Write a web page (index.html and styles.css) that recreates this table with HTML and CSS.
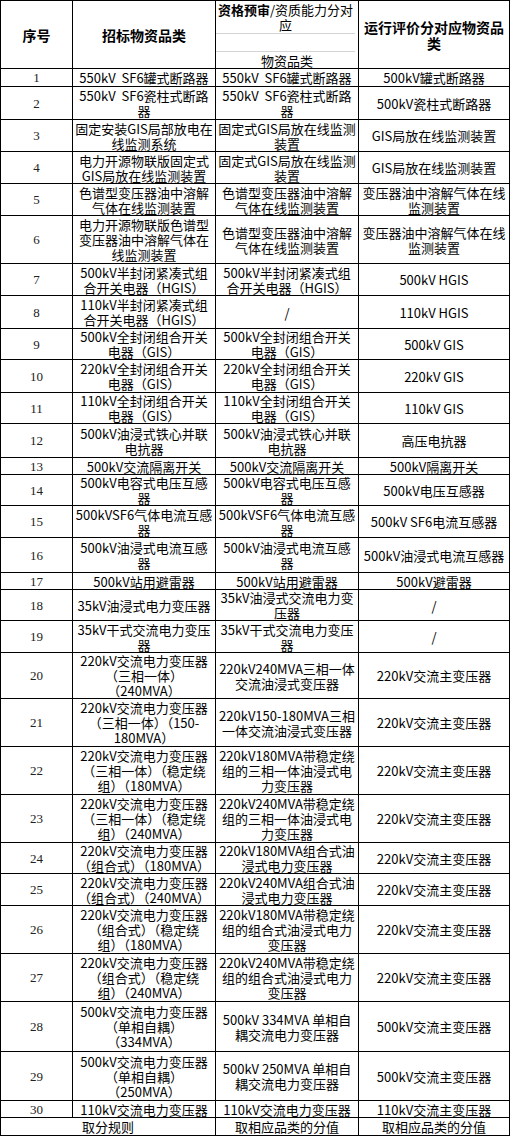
FILE: index.html
```html
<!DOCTYPE html>
<html lang="zh">
<head>
<meta charset="utf-8">
<title>物资品类对应表</title>
<link rel="stylesheet" href="styles.css">
</head>
<body>
<div class="sheet">
  <div class="c h">序号</div>
  <div class="c h">招标物资品类</div>
  <div class="c hsplit">
    <div class="hs-top"><span><b>资格预审</b>/资质能力分对<br>应</span></div>
    <div class="hs-mid"></div>
    <div class="hs-bot">物资品类</div>
  </div>
  <div class="c h">运行评价分对应物资品<br>类</div>

  <div class="c n">1</div><div class="c">550kV&nbsp;&nbsp;SF6罐式断路器</div><div class="c">550kV&nbsp;&nbsp;SF6罐式断路器</div><div class="c">500kV罐式断路器</div>
  <div class="c n">2</div><div class="c">550kV&nbsp;&nbsp;SF6瓷柱式断路<br>器</div><div class="c">550kV&nbsp;&nbsp;SF6瓷柱式断路<br>器</div><div class="c">500kV瓷柱式断路器</div>
  <div class="c n">3</div><div class="c">固定安装GIS局部放电在<br>线监测系统</div><div class="c">固定式GIS局放在线监测<br>装置</div><div class="c">GIS局放在线监测装置</div>
  <div class="c n">4</div><div class="c">电力开源物联版固定式<br>GIS局放在线监测装置</div><div class="c">固定式GIS局放在线监测<br>装置</div><div class="c">GIS局放在线监测装置</div>
  <div class="c n">5</div><div class="c">色谱型变压器油中溶解<br>气体在线监测装置</div><div class="c">色谱型变压器油中溶解<br>气体在线监测装置</div><div class="c">变压器油中溶解气体在线<br>监测装置</div>
  <div class="c n">6</div><div class="c">电力开源物联版色谱型<br>变压器油中溶解气体在<br>线监测装置</div><div class="c">色谱型变压器油中溶解<br>气体在线监测装置</div><div class="c">变压器油中溶解气体在线<br>监测装置</div>
  <div class="c n">7</div><div class="c">500kV半封闭紧凑式组<br>合开关电器（HGIS）</div><div class="c">500kV半封闭紧凑式组<br>合开关电器（HGIS）</div><div class="c">500kV HGIS</div>
  <div class="c n">8</div><div class="c">110kV半封闭紧凑式组<br>合开关电器（HGIS）</div><div class="c">/</div><div class="c">110kV HGIS</div>
  <div class="c n">9</div><div class="c">500kV全封闭组合开关<br>电器（GIS）</div><div class="c">500kV全封闭组合开关<br>电器（GIS）</div><div class="c">500kV GIS</div>
  <div class="c n">10</div><div class="c">220kV全封闭组合开关<br>电器（GIS）</div><div class="c">220kV全封闭组合开关<br>电器（GIS）</div><div class="c">220kV GIS</div>
  <div class="c n">11</div><div class="c">110kV全封闭组合开关<br>电器（GIS）</div><div class="c">110kV全封闭组合开关<br>电器（GIS）</div><div class="c">110kV GIS</div>
  <div class="c n">12</div><div class="c">500kV油浸式铁心并联<br>电抗器</div><div class="c">500kV油浸式铁心并联<br>电抗器</div><div class="c">高压电抗器</div>
  <div class="c n">13</div><div class="c">500kV交流隔离开关</div><div class="c">500kV交流隔离开关</div><div class="c">500kV隔离开关</div>
  <div class="c n">14</div><div class="c">500kV电容式电压互感<br>器</div><div class="c">500kV电容式电压互感<br>器</div><div class="c">500kV电压互感器</div>
  <div class="c n">15</div><div class="c">500kVSF6气体电流互感<br>器</div><div class="c">500kVSF6气体电流互感<br>器</div><div class="c">500kV&nbsp;SF6电流互感器</div>
  <div class="c n">16</div><div class="c">500kV油浸式电流互感<br>器</div><div class="c">500kV油浸式电流互感<br>器</div><div class="c">500kV油浸式电流互感器</div>
  <div class="c n">17</div><div class="c">500kV站用避雷器</div><div class="c">500kV站用避雷器</div><div class="c">500kV避雷器</div>
  <div class="c n">18</div><div class="c">35kV油浸式电力变压器</div><div class="c">35kV油浸式交流电力变<br>压器</div><div class="c">/</div>
  <div class="c n">19</div><div class="c">35kV干式交流电力变压<br>器</div><div class="c">35kV干式交流电力变压<br>器</div><div class="c">/</div>
  <div class="c n">20</div><div class="c">220kV交流电力变压器<br>（三相一体）<br>（240MVA）</div><div class="c">220kV240MVA三相一体<br>交流油浸式变压器</div><div class="c">220kV交流主变压器</div>
  <div class="c n">21</div><div class="c">220kV交流电力变压器<br>（三相一体）（150-<br>180MVA）</div><div class="c">220kV150-180MVA三相<br>一体交流油浸式变压器</div><div class="c">220kV交流主变压器</div>
  <div class="c n">22</div><div class="c">220kV交流电力变压器<br>（三相一体）（稳定绕<br>组）（180MVA）</div><div class="c">220kV180MVA带稳定绕<br>组的三相一体油浸式电<br>力变压器</div><div class="c">220kV交流主变压器</div>
  <div class="c n">23</div><div class="c">220kV交流电力变压器<br>（三相一体）（稳定绕<br>组）（240MVA）</div><div class="c">220kV240MVA带稳定绕<br>组的三相一体油浸式电<br>力变压器</div><div class="c">220kV交流主变压器</div>
  <div class="c n">24</div><div class="c">220kV交流电力变压器<br>（组合式）（180MVA）</div><div class="c">220kV180MVA组合式油<br>浸式电力变压器</div><div class="c">220kV交流主变压器</div>
  <div class="c n">25</div><div class="c">220kV交流电力变压器<br>（组合式）（240MVA）</div><div class="c">220kV240MVA组合式油<br>浸式电力变压器</div><div class="c">220kV交流主变压器</div>
  <div class="c n">26</div><div class="c">220kV交流电力变压器<br>（组合式）（稳定绕<br>组）（180MVA）</div><div class="c">220kV180MVA带稳定绕<br>组的组合式油浸式电力<br>变压器</div><div class="c">220kV交流主变压器</div>
  <div class="c n">27</div><div class="c">220kV交流电力变压器<br>（组合式）（稳定绕<br>组）（240MVA）</div><div class="c">220kV240MVA带稳定绕<br>组的组合式油浸式电力<br>变压器</div><div class="c">220kV交流主变压器</div>
  <div class="c n">28</div><div class="c">500kV交流电力变压器<br>（单相自耦）<br>（334MVA）</div><div class="c">500kV&nbsp;334MVA&nbsp;单相自<br>耦交流电力变压器</div><div class="c">500kV交流主变压器</div>
  <div class="c n">29</div><div class="c">500kV交流电力变压器<br>（单相自耦）<br>（250MVA）</div><div class="c">500kV&nbsp;250MVA&nbsp;单相自<br>耦交流电力变压器</div><div class="c">500kV交流主变压器</div>
  <div class="c n">30</div><div class="c">110kV交流电力变压器</div><div class="c">110kV交流电力变压器</div><div class="c">110kV交流主变压器</div>

  <div class="c span2">取分规则</div><div class="c">取相应品类的分值</div><div class="c">取相应品类的分值</div>
</div>
</body>
</html>
```

FILE: styles.css
```css
html, body {
  margin: 0;
  padding: 0;
  background: #ffffff;
}

.sheet {
  display: grid;
  grid-template-columns: 72px 143px 143px 151px;
  grid-template-rows:
    68px 18px 33px 32px 32px 32px 48px 32px 33px 31px 33px 31px 34px 17px
    31px 32px 35px 17px 31px 32px 46px 48px 48px 48px 31px 32px 48px 48px
    50px 49px 17px 18px;
  width: 509px;
  border-top: 1px solid #000;
  border-left: 1px solid #000;
  font-family: "Noto Sans CJK SC", "Noto Sans", sans-serif;
  font-size: 13px;
  line-height: 15px;
  color: #000;
}

.c {
  box-sizing: border-box;
  border-right: 1px solid #000;
  border-bottom: 1px solid #000;
  display: flex;
  align-items: center;
  justify-content: center;
  text-align: center;
  white-space: nowrap;
}

.h {
  font-weight: bold;
  font-size: 14px;
  line-height: 16px;
}

.n {
  font-family: "Liberation Serif", "DejaVu Serif", serif;
  font-size: 13px;
  color: #222;
}

.span2 {
  grid-column: span 2;
}

.hsplit {
  flex-direction: column;
  align-items: stretch;
  justify-content: flex-start;
}

.hs-top {
  height: 32px;
  display: flex;
  align-items: center;
  justify-content: center;
  line-height: 15px;
  border-bottom: 1px solid #d4d4d4;
  margin-right: 3px;
}

.hs-top b {
  font-weight: bold;
}

.hs-mid {
  height: 17px;
  border-bottom: 1px solid #d4d4d4;
  margin-right: 3px;
}

.hs-bot {
  flex: 1;
  display: flex;
  align-items: center;
  justify-content: center;
}
```
